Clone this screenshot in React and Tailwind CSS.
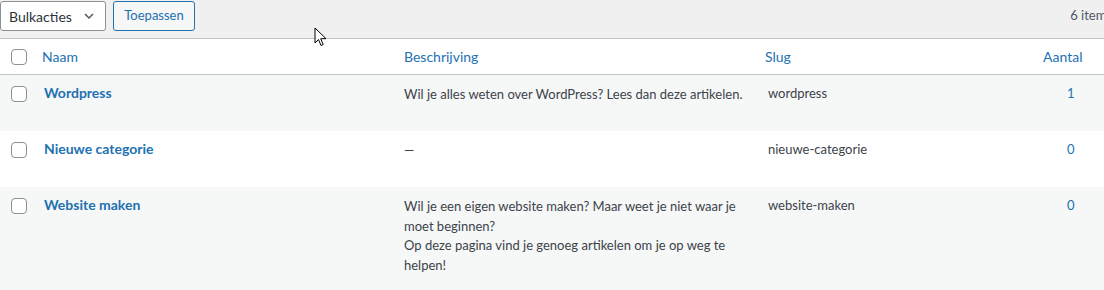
import React from 'react';

const rows = [
  { name: 'Wordpress', desc: ['Wil je alles weten over WordPress? Lees dan deze artikelen.'], slug: 'wordpress', count: 1, h: 'h-[56px]', striped: true },
  { name: 'Nieuwe categorie', desc: ['—'], slug: 'nieuwe-categorie', count: 0, h: 'h-[56px]', striped: false },
  {
    name: 'Website maken',
    desc: ['Wil je een eigen website maken? Maar weet je niet waar je moet beginnen?', 'Op deze pagina vind je genoeg artikelen om je op weg te helpen!'],
    slug: 'website-maken',
    count: 0,
    h: 'h-[110px]',
    striped: true,
  },
];

const Checkbox = () => (
  <span className="block w-4 h-4 rounded-[4px] border border-[#8c8f94] bg-white"></span>
);

const App = () => {
  return (
    <div className="relative w-[1104px] h-[290px] overflow-hidden bg-[#f0f0f1] text-[13px] text-[#3c434a]" style={{ fontFamily: 'Lato, "Noto Sans", sans-serif' }}>
      {/* Bulk actions */}
      <div className="flex items-center h-[38px] pb-[7px] pt-[1px]">
        <div className="flex items-center justify-between w-[106px] h-[30px] pl-2 pr-[10px] rounded-[3px] border border-[#8c8f94] bg-white text-[14px] text-[#2c3338]">
          <span>Bulkacties</span>
          <svg width="12" height="12" viewBox="0 0 12 12" fill="none" stroke="#50575e" strokeWidth="1.5">
            <path d="M2 4l4 4 4-4" />
          </svg>
        </div>
        <button className="ml-[7px] h-[30px] w-[82px] rounded-[3px] border border-[#2271b1] bg-[#f6f7f7] text-[13px] text-[#2271b1]">
          Toepassen
        </button>
        <span className="ml-auto mr-[-8px] text-[13px] text-[#50575e]">6 items</span>
      </div>

      {/* Table */}
      <div className="w-[1120px] border-t border-[#c3c4c7] bg-white">
        <div className="flex items-center h-[36px] border-b border-[#c3c4c7] text-[14px] text-[#2271b1]">
          <div className="w-[34px] pl-[11px]"><Checkbox /></div>
          <div className="w-[360px] pl-2">Naam</div>
          <div className="w-[361px] pl-[10px]">Beschrijving</div>
          <div className="w-[288px] pl-[10px]">Slug</div>
          <div className="w-[65px]">Aantal</div>
        </div>
        {rows.map((r) => (
          <div key={r.slug} className={`flex items-start ${r.h} ${r.striped ? 'bg-[#f6f7f7]' : 'bg-white'}`}>
            <div className="w-[34px] pl-[11px] pt-[11px]"><Checkbox /></div>
            <div className="w-[360px] pl-[10px] pt-[7px] text-[14px] font-bold text-[#2271b1]">{r.name}</div>
            <div className="w-[361px] pl-[10px] pr-[10px] pt-[10px] leading-[19.5px]">
              {r.desc.map((d) => (
                <p key={d} className="w-[340px]">{d}</p>
              ))}
            </div>
            <div className="w-[288px] pl-[13px] pt-[9px] leading-[19.5px]">{r.slug}</div>
            <div className="w-[65px] pl-[24px] pt-[9px] leading-[19.5px] text-[#2271b1]">{r.count}</div>
          </div>
        ))}
      </div>

      {/* Mouse cursor */}
      <svg className="absolute left-[314px] top-[27px]" width="14" height="20" viewBox="0 0 14 20">
        <path d="M1 1v15l3.5-3.5 2.5 6 2.2-1-2.5-5.8H12z" fill="#fff" stroke="#000" strokeWidth="1" strokeLinejoin="round" />
      </svg>
    </div>
  );
};

export default App;
